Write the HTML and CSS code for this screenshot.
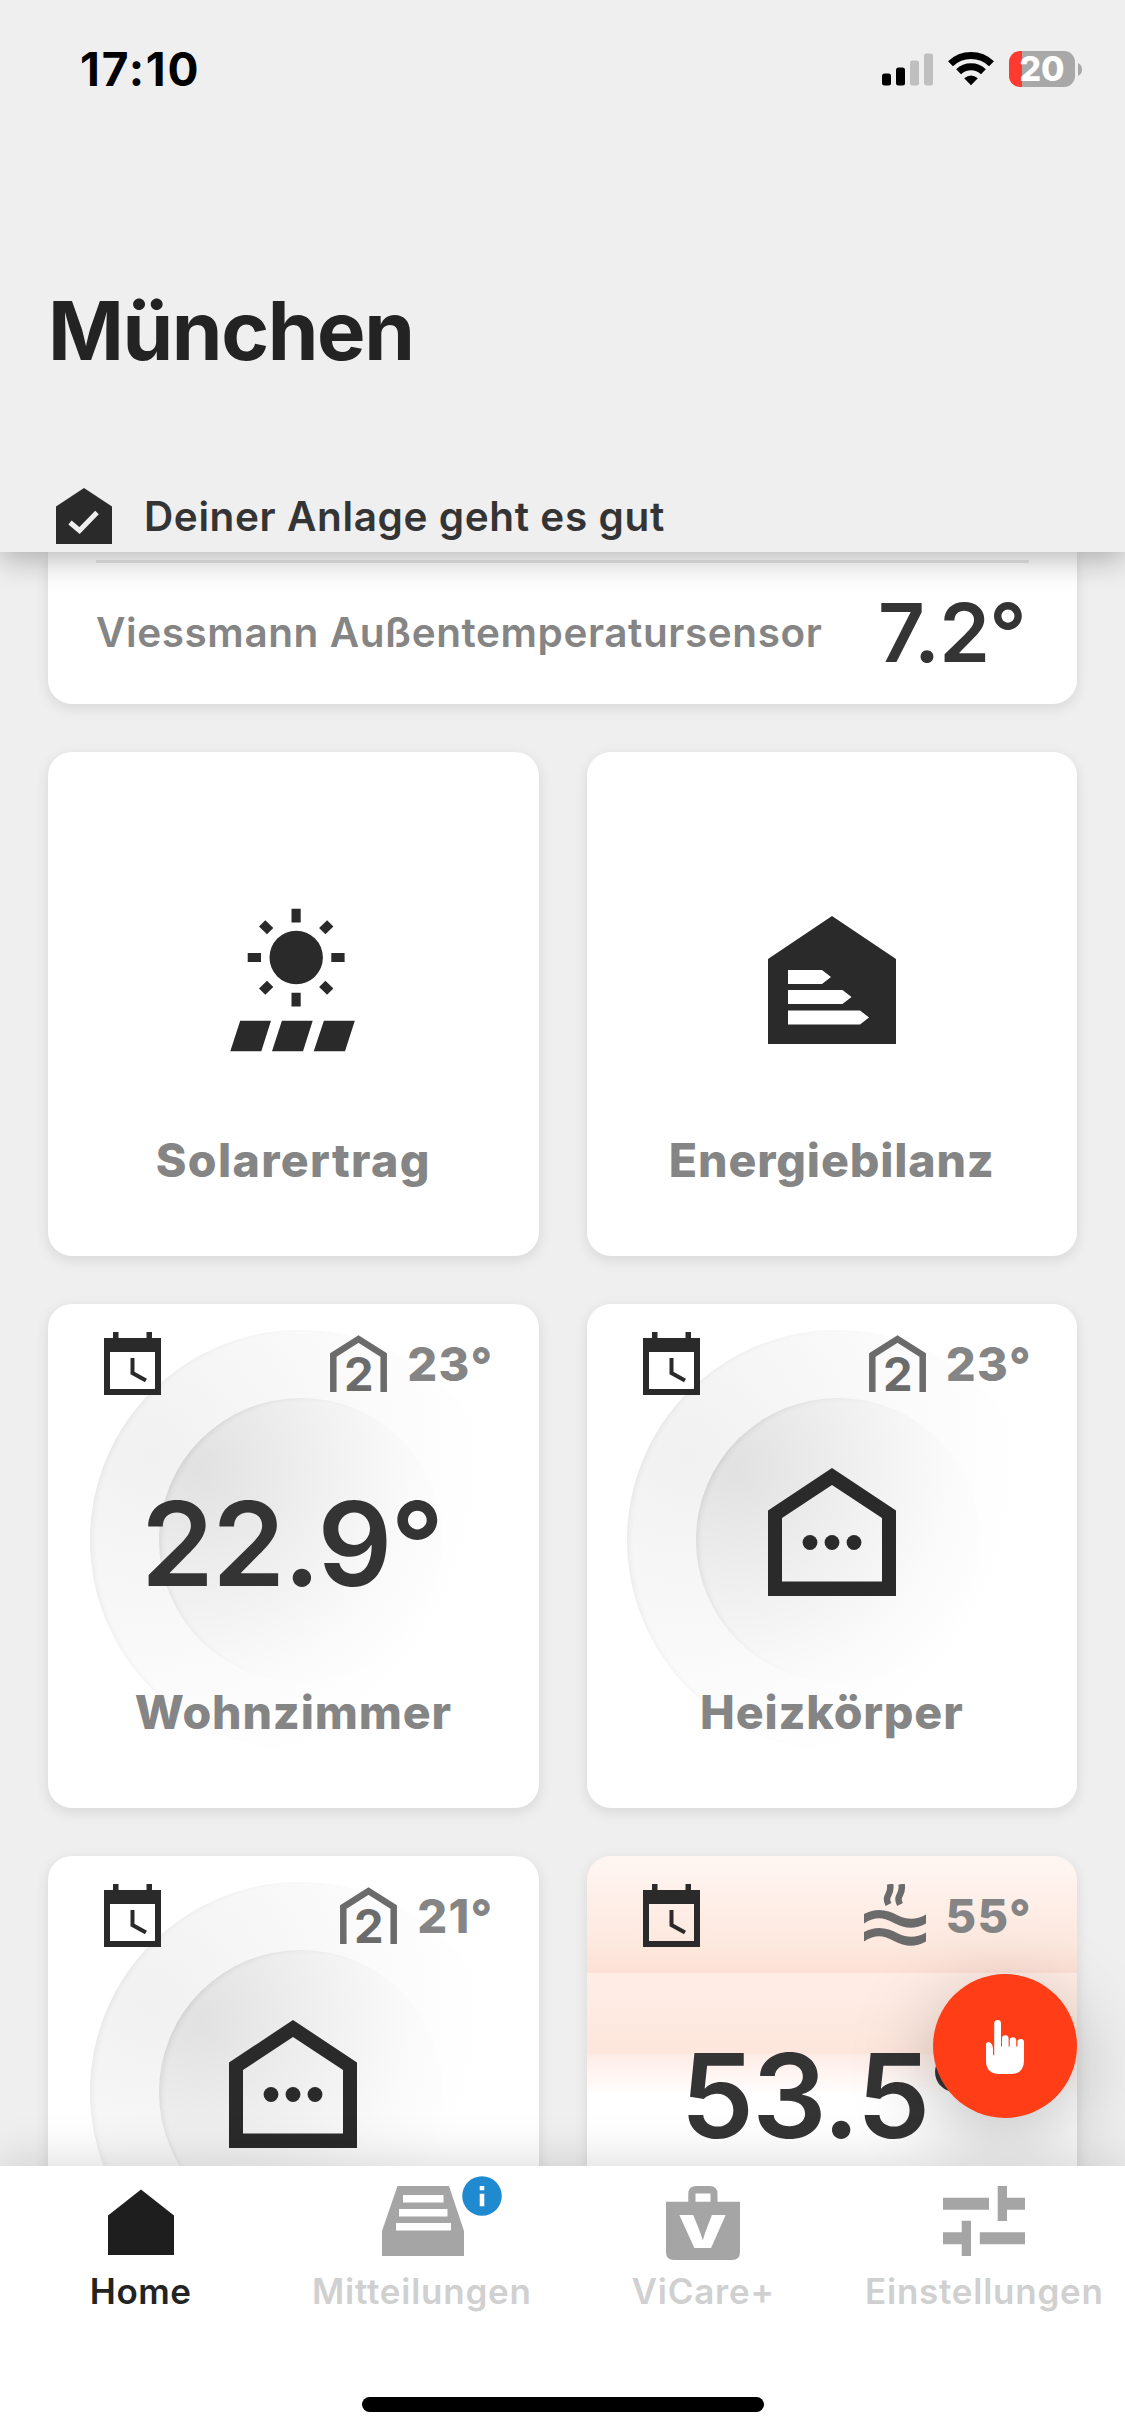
FILE: index.html
```html
<!DOCTYPE html>
<html lang="de">
<head>
<meta charset="utf-8">
<title>München</title>
<link rel="stylesheet" href="styles.css">
</head>
<body>
<svg class="defs" width="0" height="0" aria-hidden="true">
  <symbol id="calendar" viewBox="0 0 57 63">
    <path fill-rule="evenodd" d="M0 6H9V0H14.500V6H42.500V0H48V6H57V63H0ZM6 20V57H51V20Z"/>
    <path d="M28.500 26V41L42 48.500" fill="none" stroke="currentColor" stroke-width="4"/>
  </symbol>
  <symbol id="house-two" viewBox="0 0 57 57">
    <path d="M3.300 57V20L28.500 4L53.700 20V57" fill="none" stroke="currentColor" stroke-width="6.500"/>
    <text x="28.700" y="55.500" text-anchor="middle" font-family="Inter, sans-serif" font-size="47" font-weight="700">2</text>
  </symbol>
  <symbol id="house-dots" viewBox="0 0 128 128">
    <path fill-rule="evenodd" d="M64 0L128 42.500V128H0V42.500ZM64 17L14 50V113.500H114V50Z"/>
    <circle cx="42" cy="74.500" r="7.400"/><circle cx="64" cy="74.500" r="7.400"/><circle cx="86" cy="74.500" r="7.400"/>
  </symbol>
</svg>

<header class="header">
  <div class="status">
    <span class="time">17:10</span>
    <div class="indicators">
      <svg width="51" height="33" viewBox="0 0 51 33">
        <rect x="0" y="20.500" width="9" height="12" rx="2.500"/><rect x="14" y="14.500" width="9" height="18" rx="2.500"/>
        <g fill="#bfbfbf"><rect x="28" y="7.500" width="9" height="25" rx="2.500"/><rect x="42" y="0.500" width="9" height="32" rx="2.500"/></g>
      </svg>
      <svg class="wifi" width="46" height="34" viewBox="0 0 46 34">
        <g fill="none" stroke="#000" stroke-width="7">
          <path d="M2.500 11.800A29.500 29.500 0 0 1 43.500 11.800"/>
          <path d="M10.600 19.800A18 18 0 0 1 35.400 19.800"/>
        </g>
        <path d="M16.200 26.200Q23 20.600 29.800 26.200L23 33.300Z"/>
      </svg>
      <div class="battery"><span>20</span></div>
      <svg class="nub" width="4" height="13" viewBox="0 0 4 13"><path fill="#a8a8a8" d="M0 0Q4 2 4 6.500T0 13Z"/></svg>
    </div>
  </div>
  <h1 class="title">München</h1>
  <div class="notice">
    <svg width="56" height="56" viewBox="0 0 56 56"><path fill="#2a2a2a" d="M28 0L56 18.500V56H0V18.500Z"/><path d="M14 34.500L23.500 42.500L41 24.500" fill="none" stroke="#efefef" stroke-width="5"/></svg>
    <span>Deiner Anlage geht es gut</span>
  </div>
</header>

<main class="content">
  <section class="sensor">
    <div class="divider"></div>
    <div class="sensor-row"><span class="sensor-name">Viessmann Außentemperatursensor</span><span class="sensor-value">7.2°</span></div>
  </section>

  <section class="tiles">
    <article class="tile">
      <div class="main-icon solar">
        <svg width="125" height="144" viewBox="230 907.500 125 144">
          <circle cx="296.200" cy="957" r="26.700"/>
          <path d="M291.500 908.300h9.200V922h-9.200ZM291.500 992.300h9.200V1006h-9.200ZM247.700 952.400H261v9.200H247.700ZM331.300 952.400h13.300v9.200H331.300Z"/>
          <path d="M259 926L265.300 919.700L273.300 927.500L267 933.800ZM333.400 926L327.100 919.700L319.100 927.500L325.400 933.800ZM259 988L265.300 994.300L273.300 986.500L267 980.200ZM333.400 988L327.100 994.300L319.100 986.500L325.400 980.200Z"/>
          <path d="M240.200 1020.300H271L261.300 1050.700H230.300ZM281.900 1020.300H312.700L303 1050.700H272ZM323.900 1020.300H354.800L345 1050.700H313.700Z"/>
        </svg>
      </div>
      <h2 class="label wide">Solarertrag</h2>
    </article>
    <article class="tile">
      <div class="main-icon">
        <svg width="128" height="128" viewBox="0 0 128 128"><path fill-rule="evenodd" d="M64 0L128 43V128H0V43ZM20 54V68H54L63 61L54 54ZM20 74V88H74.500L83.500 81L74.500 74ZM20 94.500V108.500H92L101 101.500L92 94.500Z"/></svg>
      </div>
      <h2 class="label">Energiebilanz</h2>
    </article>

    <article class="tile dial">
      <div class="top"><svg class="cal" width="57" height="63"><use href="#calendar"/></svg><div class="target"><svg class="mode" width="57" height="57"><use href="#house-two"/></svg><span>23°</span></div></div>
      <div class="reading">22.9°</div>
      <h2 class="label">Wohnzimmer</h2>
    </article>
    <article class="tile dial">
      <div class="top"><svg class="cal" width="57" height="63"><use href="#calendar"/></svg><div class="target"><svg class="mode" width="57" height="57"><use href="#house-two"/></svg><span>23°</span></div></div>
      <div class="main-icon"><svg width="128" height="128"><use href="#house-dots"/></svg></div>
      <h2 class="label">Heizkörper</h2>
    </article>

    <article class="tile dial">
      <div class="top"><svg class="cal" width="57" height="63"><use href="#calendar"/></svg><div class="target"><svg class="mode" width="57" height="57"><use href="#house-two"/></svg><span>21°</span></div></div>
      <div class="main-icon"><svg width="128" height="128"><use href="#house-dots"/></svg></div>
    </article>
    <article class="tile water">
      <div class="top"><svg class="cal" width="57" height="63"><use href="#calendar"/></svg>
        <div class="target">
          <svg class="mode" width="62" height="63" viewBox="0 0 62 63">
            <path d="M0 30C13 23 24 26 34 31.500C44 36 52 36 62 30.500V39.500C50 46 41 44.500 30 39C19 33.500 12 32 0 39.500ZM0 48C13 41 24 44 34 49.500C44 54 52 54 62 48.500V57.500C50 64 41 62.500 30 57C19 51.500 12 50 0 57.500Z"/>
            <path d="M26 0C28.500 11 19.500 11 24.500 20.500M37.500 0C40 11 31 11 36 20.500" fill="none" stroke="currentColor" stroke-width="6.500"/>
          </svg><span>55°</span>
        </div>
      </div>
      <div class="reading">53.5°</div>
    </article>
  </section>
  <button class="fab" aria-label="Aktion">
    <svg width="38" height="54" viewBox="0 0 38 54"><path d="M0 26V24.500C0 20 7 21.500 7 29V33.500Q7 35.500 8.200 35.500V3.500A3.350 3.350 0 0 1 15 3.500V26.500H16V18.500A3.300 3.300 0 0 1 22.600 18.500V26.500H23.700V20A3.300 3.300 0 0 1 30.200 20V26.500H31.400V22.300A3.300 3.300 0 0 1 38 22.300V40.500Q38 54 24.500 54H13.500Q0 54 0 40.500Z"/></svg>
  </button>
</main>

<nav class="nav">
  <div class="tabs">
    <a class="tab active">
      <svg width="66" height="74" viewBox="0 0 66 74"><path d="M33 3.500L66 29.500V69H0V29.500Z"/></svg><span>Home</span>
    </a>
    <a class="tab">
      <span class="icon-wrap"><svg width="82" height="74" viewBox="0 0 82 74"><path fill-rule="evenodd" d="M15.500 0H67L82 45V70H0V45ZM21 9V16.500H61.500V9ZM17 23V30.500H65.500V23ZM14 37V44.500H69V37Z"/></svg>
      <svg class="badge" width="40" height="40" viewBox="0 0 40 40"><circle cx="20" cy="20" r="19.800" fill="#1f8ad0"/><path fill="#fff" d="M17.700 10h4.600v4.200h-4.600ZM17.700 17.800h4.600V30.300h-4.600Z"/></svg></span>
      <span>Mitteilungen</span>
    </a>
    <a class="tab">
      <svg width="74" height="74" viewBox="0 0 74 74"><path fill-rule="evenodd" d="M0 15.700H22.300V8Q22.300 0 30.300 0H43.500Q51.500 0 51.500 8V15.700H74V66Q74 74 66 74H8Q0 74 0 66ZM29.500 7.500V15.700H44.500V7.500Z"/><text x="12" y="61.500" fill="#fff" font-family="Inter, sans-serif" font-weight="900" font-size="46" textLength="50" lengthAdjust="spacingAndGlyphs">V</text></svg>
      <span>ViCare+</span>
    </a>
    <a class="tab">
      <svg width="82" height="74" viewBox="0 0 82 74"><path d="M0 11.700H46V23.700H0ZM54.700 0H64V11.700H82V23.700H64V35H54.700ZM0 46.300H18.700V34.700H28V70H18.700V58.300H0ZM36.800 46.300H82V58.300H36.800Z"/></svg>
      <span>Einstellungen</span>
    </a>
  </div>
  <div class="home-bar"></div>
</nav>
</body>
</html>
```
FILE: styles.css
```css
* { box-sizing: border-box; }
body {
  margin: 0;
  width: 1125px;
  height: 2436px;
  overflow: hidden;
  display: flex;
  flex-direction: column;
  background: #efefef;
  color: #343434;
  font-family: Inter, "Liberation Sans", sans-serif;
}
h1, h2 { margin: 0; }
svg { display: block; flex: none; }
.defs { display: none; }

.header {
  position: relative;
  z-index: 2;
  flex: none;
  height: 552px;
  background: #efefef;
  box-shadow: 0 6px 30px rgba(0, 0, 0, .3);
}
.status {
  display: flex;
  align-items: center;
  justify-content: space-between;
  height: 138px;
  padding: 0 43px 0 80px;
  color: #000;
}
.time { font-size: 46px; font-weight: 700; letter-spacing: 1.8px; }
.indicators { display: flex; align-items: center; }
.wifi { margin: 0 15px; }
.battery {
  width: 66px;
  height: 36px;
  display: flex;
  align-items: center;
  justify-content: center;
  border-radius: 11px;
  background: linear-gradient(90deg, #ff3b30 13px, #a8a8a8 13px);
  color: #fff;
  font-size: 34px;
  font-weight: 800;
  line-height: 36px;
}
.nub { margin-left: 3px; }
.title {
  height: 124px;
  margin: 131px 0 87px;
  padding-left: 48px;
  color: #232323;
  font-size: 81.500px;
  font-weight: 700;
  line-height: 124px;
  letter-spacing: -1.4px;
}
.notice {
  display: flex;
  align-items: center;
  gap: 32px;
  height: 72px;
  padding-left: 56px;
  font-size: 40.500px;
  font-weight: 600;
  letter-spacing: .6px;
}

.content {
  position: relative;
  flex: none;
  height: 1614px;
  overflow: hidden;
  padding: 0 48px;
}
.sensor {
  height: 152px;
  padding: 8px 48px 0;
  border-radius: 0 0 24px 24px;
  background: #fff;
  box-shadow: 0 4px 14px rgba(0, 0, 0, .1);
}
.divider { height: 3px; background: #e8e8e8; }
.sensor-row {
  display: flex;
  align-items: center;
  justify-content: space-between;
  height: 141px;
  padding-bottom: 3px;
}
.sensor-name { color: #858585; font-size: 40.500px; font-weight: 600; letter-spacing: .57px; }
.sensor-value { margin-right: 3px; font-size: 81.500px; font-weight: 600; letter-spacing: -.7px; }

.tiles {
  display: grid;
  grid-template-columns: 1fr 1fr;
  grid-auto-rows: 504px;
  gap: 48px;
  margin-top: 48px;
}
.tile {
  position: relative;
  display: grid;
  grid-template-rows: 120px 216px 144px;
  border-radius: 24px;
  background: #fff;
  box-shadow: 0 4px 14px rgba(0, 0, 0, .1);
  overflow: hidden;
}
.tile > * { position: relative; }
.top {
  display: flex;
  align-items: center;
  justify-content: space-between;
  padding: 0 45px 1px 56px;
  color: #858585;
  font-size: 47px;
  font-weight: 800;
  letter-spacing: 1.3px;
}
.cal { color: #2a2a2a; fill: currentColor; }
.target { display: flex; align-items: center; gap: 20px; }
.mode { color: #6b6b6b; fill: currentColor; letter-spacing: 0; }
.main-icon {
  grid-row: 2;
  display: flex;
  align-items: center;
  justify-content: center;
  fill: #2a2a2a;
}
.solar { padding-right: 2px; }
.reading {
  display: flex;
  align-items: center;
  justify-content: center;
  padding: 23px 3px 0 0;
  font-size: 117px;
  font-weight: 600;
  line-height: 1;
  letter-spacing: -1.8px;
}
.label {
  grid-row: 3;
  text-align: center;
  color: #858585;
  font-size: 46.500px;
  font-weight: 800;
  line-height: 144px;
  letter-spacing: .85px;
}
.wide { letter-spacing: 1.350px; }

/* soft recessed rings behind the room temperature */
.dial::before, .dial::after {
  content: "";
  position: absolute;
  border-radius: 50%;
}
.dial::before {
  left: 42px;
  top: 26px;
  width: 420px;
  height: 420px;
  background: radial-gradient(circle at 14% 30%, #f1f1f1 0, #fafafa 45%, #fff 72%);
  box-shadow: inset 5px 1px 6px -4px rgba(0, 0, 0, .07);
}
.dial::after {
  left: 111px;
  top: 94px;
  width: 284px;
  height: 284px;
  background: radial-gradient(circle at 14% 25%, #e1e1e1 0, #f0f0f0 38%, #fafafa 65%, #fff 88%);
  box-shadow: inset 5px 2px 6px -4px rgba(0, 0, 0, .1);
}
.tile:nth-child(even)::before { left: 40px; }
.tile:nth-child(even)::after { left: 109px; }
.dial > * { z-index: 1; }

.water {
  background: linear-gradient(180deg,
    #fff6f2 0, #fde8de 90px, #fde0d5 117px,
    #ffeee6 117px, #fde6dc 198px,
    #feece6 198px, #fff 240px);
}

.fab {
  position: absolute;
  right: 48px;
  top: 1422px;
  width: 144px;
  height: 144px;
  display: flex;
  align-items: center;
  justify-content: center;
  padding: 2px 0 0;
  border: 0;
  border-radius: 50%;
  background: #ff3e17;
  fill: #fff;
  box-shadow: 0 24px 84px rgba(0, 0, 0, .26);
}

.nav {
  position: relative;
  z-index: 2;
  flex: none;
  height: 270px;
  background: #fff;
  box-shadow: 0 0 48px rgba(0, 0, 0, .17);
}
.tabs {
  display: grid;
  grid-template-columns: repeat(4, 1fr);
  height: 231px;
  padding-top: 20px;
}
.tab {
  display: flex;
  flex-direction: column;
  align-items: center;
  gap: 10px;
  color: #d0d0d0;
  fill: #a5a5a5;
  font-size: 35px;
  font-weight: 600;
  line-height: 42px;
  letter-spacing: .75px;
}
.active { color: #232323; fill: #1e1e1e; letter-spacing: .5px; }
.icon-wrap { position: relative; left: 1px; }
.badge { position: absolute; left: 80px; top: -10px; }
.home-bar {
  width: 402px;
  height: 15px;
  margin: 0 auto;
  border-radius: 8px;
  background: #000;
}
```
